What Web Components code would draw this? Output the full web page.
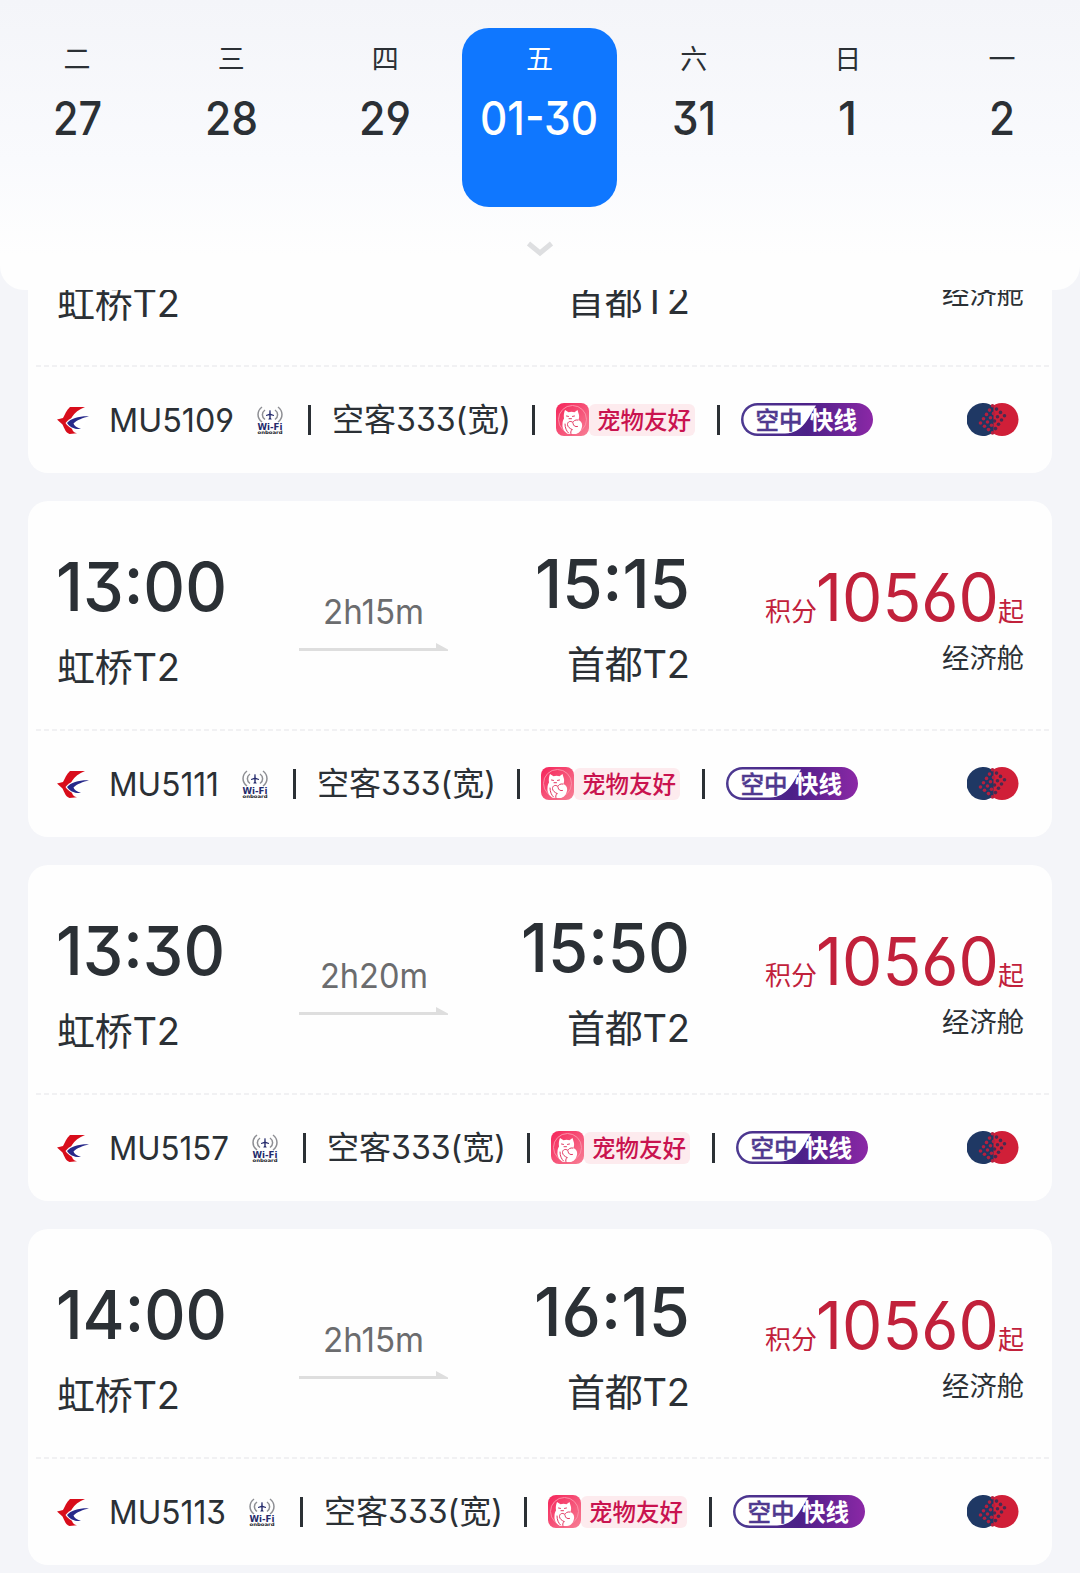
<!DOCTYPE html>
<html lang="zh-CN">
<head>
<meta charset="utf-8">
<title>航班列表</title>
<style>
body {
    margin: 0;
    height: 1573px;
    overflow: hidden;
    background: #f4f5f9;
    color: #2b3035;
    font-family: Inter, "Noto Sans CJK SC", sans-serif;
    font-feature-settings: "cv03", "cv04", "cv09";
}
</style>
</head>
<body>
<date-bar>
    <date-cell day="二" size="49">27</date-cell>
    <date-cell day="三" size="53">28</date-cell>
    <date-cell day="四" size="52">29</date-cell>
    <date-cell day="五" size="118" active>01-30</date-cell>
    <date-cell day="六" size="44">31</date-cell>
    <date-cell day="日" size="19">1</date-cell>
    <date-cell day="一" size="26">2</date-cell>
</date-bar>
<flight-list>
    <flight-card code="MU5109" code-width="125" depart="12:00" depart-width="171" arrive="14:15" arrive-width="155" duration="2h15m" duration-width="101"></flight-card>
    <flight-card code="MU5111" code-width="110" depart="13:00" depart-width="171" arrive="15:15" arrive-width="155" duration="2h15m" duration-width="101"></flight-card>
    <flight-card code="MU5157" code-width="120" depart="13:30" depart-width="169" arrive="15:50" arrive-width="169" duration="2h20m" duration-width="108"></flight-card>
    <flight-card code="MU5113" code-width="117" depart="14:00" depart-width="171" arrive="16:15" arrive-width="156" duration="2h15m" duration-width="101"></flight-card>
</flight-list>

<script>
/**
 * Sets its text to a given width: condenses Latin text, tracks mixed text
 * <fit-text width="120">text</fit-text>
 */
class FitText extends HTMLElement {
    connectedCallback() {
        this.attachShadow({mode: "open"});
        this.shadowRoot.innerHTML = `
            <style>
            :host { display: inline-block; white-space: nowrap; text-align: left; }
            span { display: inline-block; transform-origin: left; }
            </style><span><slot></slot></span>`;
        const span = this.shadowRoot.querySelector("span");
        const width = Number(this.getAttribute("width"));
        const text = this.textContent;
        const natural = span.getBoundingClientRect().width;
        this.style.width = `${width}px`;
        if (/^[\x20-\x7e]+$/.test(text)) {
            span.style.transform = `scaleX(${width / natural})`;
        } else {
            span.style.letterSpacing = `${(width - natural) / (text.length - 1)}px`;
        }
    }
}

/**
 * One day of the date bar
 * <date-cell day="五" size="115" active />
 */
class DateCell extends HTMLElement {
    connectedCallback() {
        this.attachShadow({mode: "open"});
        this.shadowRoot.innerHTML = `
            <style>
            :host {
                display: flex;
                flex-direction: column;
                align-items: center;
                box-sizing: border-box;
                height: 179px;
                padding-top: 14px;
                border-radius: 27px;
            }
            :host([active]) { background: #0f77ff; color: #fff; }
            .day { font-size: 27px; line-height: 36px; }
            .date {
                margin-top: 15px;
                font-size: 46px;
                font-weight: 500;
                line-height: 50px;
            }
            </style>
            <div class="day">${this.getAttribute("day")}</div>
            <div class="date"><fit-text width="${this.getAttribute("size")}">${this.textContent}</fit-text></div>`;
    }
}

class DateBar extends HTMLElement {
    connectedCallback() {
        this.attachShadow({mode: "open"});
        this.shadowRoot.innerHTML = `
            <style>
            :host {
                display: block;
                position: relative;
                z-index: 1;
                box-sizing: border-box;
                height: 290px;
                padding-top: 28px;
                border-radius: 0 0 24px 24px;
                background: linear-gradient(#f4f5f9, #f9fafd 55%, #fefefe 88%);
            }
            .days { display: grid; grid-template-columns: repeat(7, 1fr); padding-right: 1px; }
            svg { display: block; margin: 34px auto 0; }
            </style>
            <div class="days"><slot></slot></div>
            <svg width="28" height="16" viewBox="0 0 28 16" fill="none" stroke="#dedfe1" stroke-width="5">
                <path d="M2.500 2.500 14 12 25.500 2.500"/>
            </svg>`;
    }
}

class FlightList extends HTMLElement {
    connectedCallback() {
        this.attachShadow({mode: "open"});
        this.shadowRoot.innerHTML = `
            <style>
            :host {
                display: flex;
                flex-direction: column;
                gap: 28px;
                margin-top: -153px;
                padding: 0 28px;
            }
            </style><slot></slot>`;
    }
}

class AirlineLogo extends HTMLElement {
    connectedCallback() {
        this.attachShadow({mode: "open"});
        this.shadowRoot.innerHTML = `
            <style>:host, svg { display: block; }</style>
            <svg width="32" height="28" viewBox="0 0 32 28">
                <path fill="#d80d1b" d="M13 1H28C22 3.500 17.500 6.500 15 11 12.500 15.500 13 20 15 23 16 25.500 17.500 27 20 27.300L12.500 28C8.500 26.500 7.500 22.500 5.500 18.500L0 13.500 6 12C8 8.500 9.500 4 13 1Z"/>
                <path fill="#fff" d="M32 8.500C21 8.500 13 11 8.500 17 12 22 17.500 25 25 23.500Z"/>
                <path fill="#27298a" d="M32 10.300C22 10 14 12.300 10 17 12.500 21 17.500 23.600 24 23 19.500 21.500 17 19.500 16.500 17.500 20 14 26 12 32 10.300Z"/>
            </svg>`;
    }
}

class WifiIcon extends HTMLElement {
    connectedCallback() {
        this.attachShadow({mode: "open"});
        this.shadowRoot.innerHTML = `
            <style>:host, svg { display: block; }</style>
            <svg width="26" height="28" viewBox="0 0 26 28">
                <g fill="none" stroke="#8d8e93" stroke-width="1.500">
                    <path d="M5 1C-.3 5-.3 12 5 16M8 4C4.500 6.500 4.500 11 8 13.500M21 1C26.300 5 26.300 12 21 16M18 4C21.500 6.500 21.500 11 18 13.500"/>
                </g>
                <path fill="#23296b" d="M13 4C13.600 4 13.700 5 13.700 7.700L17 9V9.900L13.700 9.300V12L14.600 13V13.500H11.400V13L12.300 12V9.300L9 9.900V9L12.300 7.700C12.300 5 12.400 4 13 4Z"/>
                <text x="0.500" y="24" font-family="DejaVu Sans" font-size="8.500" font-weight="bold" fill="#23296b" textLength="25" lengthAdjust="spacingAndGlyphs">Wi-Fi</text>
                <text x="0.500" y="28" font-family="DejaVu Sans" font-size="4.500" font-weight="bold" fill="#17191f" textLength="25" lengthAdjust="spacingAndGlyphs">onboard</text>
            </svg>`;
    }
}

class PetBadge extends HTMLElement {
    connectedCallback() {
        this.attachShadow({mode: "open"});
        this.shadowRoot.innerHTML = `
            <style>
            :host { display: flex; align-items: center; }
            svg { display: block; }
            span {
                box-sizing: border-box;
                width: 106px;
                height: 32px;
                padding-left: 8px;
                border-radius: 6px;
                background: #fdebee;
                color: #c9134f;
                font-size: 23.5px;
                font-weight: 500;
                line-height: 33px;
                white-space: nowrap;
            }
            </style>
            <svg width="33" height="33" viewBox="0 0 33 33">
                <defs>
                    <linearGradient id="pet" x1="0" y1="0" x2="1" y2="1">
                        <stop offset="0" stop-color="#f5245a"/>
                        <stop offset="1" stop-color="#f77f95"/>
                    </linearGradient>
                </defs>
                <rect width="33" height="33" rx="8" fill="url(#pet)"/>
                <circle cx="16.500" cy="16.500" r="14" fill="none" stroke="#fb91a8" stroke-width="1"/>
                <path fill="#fff" d="M9 7 12.500 9.300C14.500 8.500 16.500 8.500 18.500 9.300L21.500 7 23 12C23.300 14 23 15.500 22.500 17 26 18.500 27 22 25.500 25.500 24.500 28.500 22 31 19 31H12C8.500 29 6 25.500 6.500 21 6.500 18.500 7 17 8 15.500 7.500 12.500 8 9.500 9 7Z"/>
                <g fill="none" stroke="#e23862" stroke-width="1" stroke-linecap="round">
                    <path d="M10.500 13 12.500 13.400M16.500 13.400 18.500 13M13 15.700H15.500M22 17C19 16.500 17.500 18 17 19.500 14.500 17.500 11.500 18.500 11.500 21.500 11.500 24 14 25.500 16 26.500M17 20.500C17.500 23 19 24 21.500 23.500M16 26.500C14.500 28 14.500 30 15 31M9 21C9 25 10.500 28 12.500 30"/>
                </g>
            </svg>
            <span>宠物友好</span>`;
    }
}

class ExpressBadge extends HTMLElement {
    connectedCallback() {
        this.attachShadow({mode: "open"});
        this.shadowRoot.innerHTML = `
            <style>
            :host, svg { display: block; }
            text { font: 700 23.5px "Noto Sans CJK SC", sans-serif; }
            </style>
            <svg width="132" height="33" viewBox="0 0 132 33">
                <defs>
                    <linearGradient id="pill">
                        <stop offset="0" stop-color="#4c3a91"/>
                        <stop offset=".5" stop-color="#4c2088"/>
                        <stop offset="1" stop-color="#8b28a6"/>
                    </linearGradient>
                </defs>
                <rect width="132" height="33" rx="16.500" fill="url(#pill)"/>
                <path fill="#fff" d="M16.500 2.500H75C67 15 62 30 44 30.500H16.500A14 14 0 0 1 16.500 2.500Z"/>
                <text x="14.500" y="25.500" fill="#4f398f" stroke="#4f398f" stroke-width=".4" style="font-weight: 500">空中</text>
                <text x="69" y="25.500" fill="#fff">快线</text>
            </svg>`;
    }
}

class AllianceLogo extends HTMLElement {
    connectedCallback() {
        let dots = "";
        for (let i = -2; i <= 1; i++) {
            for (let j = -2; j <= 2; j++) {
                const x = 27.500 + (i - j) * 3.5 + (i + j) * 0.5;
                const y = 18 + (i + j) * 3.8 - (i - j) * 0.5;
                const fill = x < 27.500 ? "#b3203f" : "#4a2a4f";
                dots += `<circle cx="${x}" cy="${y}" r="1.800" fill="${fill}"/>`;
            }
        }
        this.attachShadow({mode: "open"});
        this.shadowRoot.innerHTML = `
            <style>:host, svg { display: block; }</style>
            <svg width="52" height="33" viewBox="0 0 52 33">
                <circle cx="35" cy="16.500" r="16.500" fill="#d01f38"/>
                <path fill="#1f3864" d="M16.500 0A16.500 16.500 0 0 1 26.500 3.700V29.300A16.500 16.500 0 1 1 16.500 0Z"/>
                ${dots}
            </svg>`;
    }
}

/**
 * Flight card: schedule and price on top, aircraft and services below
 */
class FlightCard extends HTMLElement {
    connectedCallback() {
        const attr = name => this.getAttribute(name);
        this.attachShadow({mode: "open"});
        this.shadowRoot.innerHTML = `
            <style>
            :host {
                display: block;
                flex: none;
                box-sizing: border-box;
                height: 336px;
                border-radius: 20px;
                background: #fefefe;
            }
            .schedule {
                display: flex;
                box-sizing: border-box;
                height: 228px;
                padding: 0 28px 0 29px;
            }
            .depart { width: 242px; padding-top: 50px; }
            .duration { width: 149px; padding-top: 91px; text-align: center; color: #6b6c6e; font-size: 34px; line-height: 40px; }
            .arrive { width: 242px; padding-top: 47px; text-align: right; }
            .price { flex: 1; padding-top: 63px; text-align: right; }
            .time {
                height: 70px;
                font-size: 68px;
                font-weight: 500;
                line-height: 70px;
            }
            .depart .time { margin-left: -1px; }
            .city { margin-top: 21px; font-size: 38px; line-height: 50px; }
            .duration svg { display: block; margin-top: 11px; }
            .points { display: flex; justify-content: flex-end; height: 66px; color: #c1213b; font-size: 26px; line-height: 66px; align-items: baseline; }
            .points fit-text { margin: 0 -1px; font-size: 66px; }
            .cabin { margin-top: 9px; font-size: 27.3px; line-height: 40px; }
            hr { margin: 0 3px 0 8px; border: 0; height: 2px; background: repeating-linear-gradient(90deg, #f1f1f3 0 5px, transparent 5px 8px); }
            footer {
                display: flex;
                align-items: center;
                box-sizing: border-box;
                height: 105px;
                padding: 0 33px 0 29px;
                font-size: 33px;
                line-height: 40px;
            }
            .code { margin-left: 20px; }
            wifi-icon { margin-left: 23px; }
            i { width: 3px; height: 30px; margin: 0 21px 0 22px; background: #2b3035; }
            wifi-icon + i { margin: 0 21px 0 25px; }
            .plane + i { margin-left: 21px; }
            .plane { font-size: 32px; }
            alliance-logo { margin-left: auto; }
            </style>
            <div class="schedule">
                <div class="depart">
                    <div class="time"><fit-text width="${attr("depart-width")}">${attr("depart")}</fit-text></div>
                    <div class="city"><fit-text width="123">虹桥T2</fit-text></div>
                </div>
                <div class="duration">
                    <fit-text width="${attr("duration-width")}">${attr("duration")}</fit-text>
                    <svg width="149" height="8" viewBox="0 0 149 8" fill="#dedede"><path d="M0 5H137V0L149 6.500V8H0Z"/></svg>
                </div>
                <div class="arrive">
                    <div class="time"><fit-text width="${attr("arrive-width")}">${attr("arrive")}</fit-text></div>
                    <div class="city"><fit-text width="123">首都T2</fit-text></div>
                </div>
                <div class="price">
                    <div class="points">积分<fit-text width="183">10560</fit-text>起</div>
                    <div class="cabin">经济舱</div>
                </div>
            </div>
            <hr>
            <footer>
                <airline-logo></airline-logo>
                <fit-text class="code" width="${attr("code-width")}">${attr("code")}</fit-text>
                <wifi-icon></wifi-icon>
                <i></i>
                <fit-text class="plane" width="179">空客333(宽)</fit-text>
                <i></i>
                <pet-badge></pet-badge>
                <i></i>
                <express-badge></express-badge>
                <alliance-logo></alliance-logo>
            </footer>`;
    }
}

customElements.define("fit-text", FitText);
customElements.define("date-cell", DateCell);
customElements.define("date-bar", DateBar);
customElements.define("airline-logo", AirlineLogo);
customElements.define("wifi-icon", WifiIcon);
customElements.define("pet-badge", PetBadge);
customElements.define("express-badge", ExpressBadge);
customElements.define("alliance-logo", AllianceLogo);
customElements.define("flight-list", FlightList);
customElements.define("flight-card", FlightCard);
</script>
</body>
</html>
